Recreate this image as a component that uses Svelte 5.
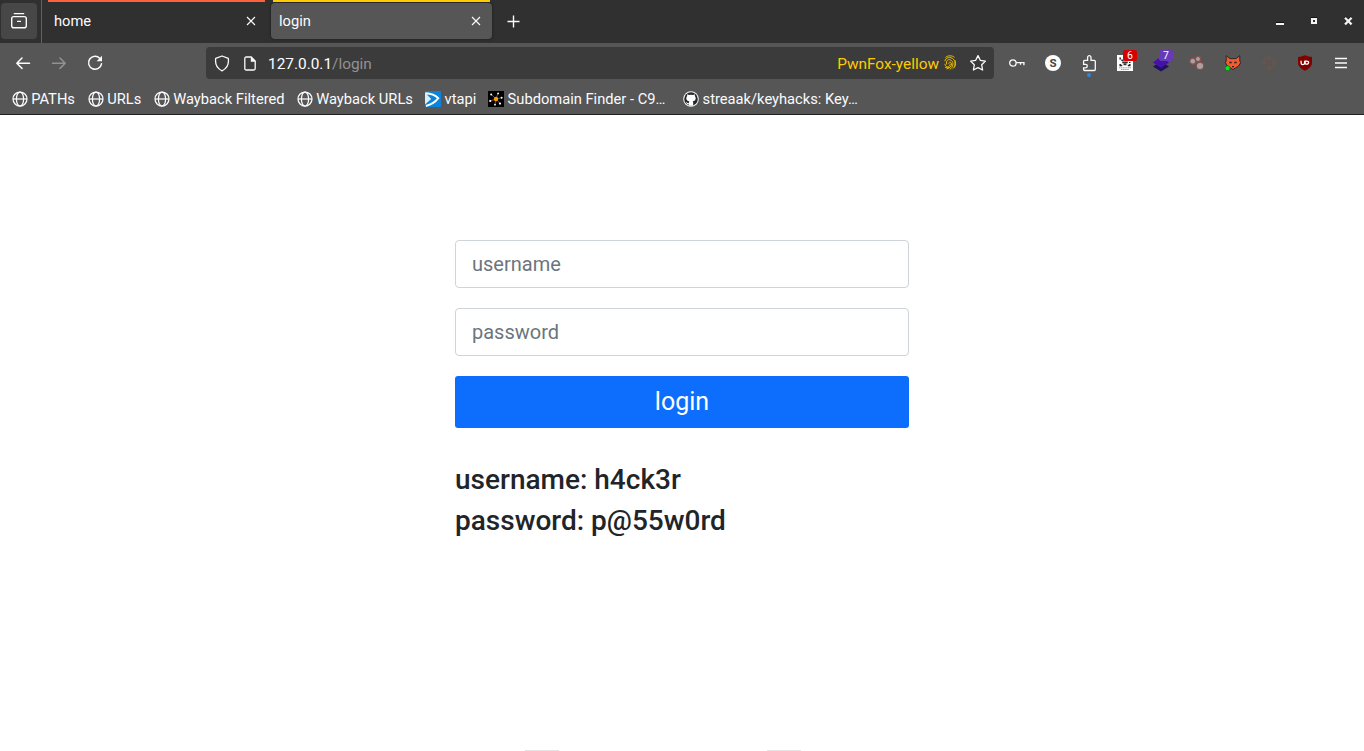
<script>
  const bookmarks = [
    { label: 'PATHs', icon: 'globe', width: 76 },
    { label: 'URLs', icon: 'globe', width: 66 },
    { label: 'Wayback Filtered', icon: 'globe', width: 143 },
    { label: 'Wayback URLs', icon: 'globe', width: 128.4 },
    { label: 'vtapi', icon: 'vt', width: 63 },
    { label: 'Subdomain Finder - C9…', icon: 'sub', width: 195 },
    { label: 'streaak/keyhacks: Key…', icon: 'github', width: 190 }
  ];
</script>

<div class="window">
  <header class="tabs">
    <button class="overview" aria-label="Recent">
      <svg width="18" height="18" viewBox="0 0 18 18" fill="none" stroke="#fbfbfe" stroke-width="1.4">
        <path d="M4.3 1.6h9.4" stroke-linecap="round" />
        <path d="M1.7 6.7Q1.7 4.6 3.8 4.6h10.4q2.1 0 2.1 2.1v7q0 2.1-2.1 2.1H3.8q-2.1 0-2.1-2.1zM7 9.4h4" />
      </svg>
    </button>
    <div class="tab home">
      <span>home</span>
      <svg width="10" height="10" viewBox="0 0 10 10" stroke="#fbfbfe" stroke-width="1.1"><path d="m1 1 8 8m0-8L1 9" /></svg>
    </div>
    <div class="tab active">
      <span>login</span>
      <svg width="10" height="10" viewBox="0 0 10 10" stroke="#fbfbfe" stroke-width="1.1"><path d="m1 1 8 8m0-8L1 9" /></svg>
    </div>
    <button class="new" aria-label="New tab">
      <svg width="13" height="13" viewBox="0 0 13 13" stroke="#fbfbfe" stroke-width="1.4"><path d="M6.5.5v12M.5 6.5h12" /></svg>
    </button>
    <div class="controls">
      <svg width="8" height="10" viewBox="0 0 8 10"><path d="M0 6h8v1H0z" fill="#111" /><path d="M0 7h8v2H0z" fill="#f3f3f3" /></svg>
      <svg width="6" height="8" viewBox="0 0 6 8"><path d="M0 0h6v1H0z" fill="#111" /><path d="M1 2h4v4H1z" fill="none" stroke="#f3f3f3" stroke-width="2" /></svg>
      <svg width="9" height="10" viewBox="0 0 9 10"><path d="m1 1 6.5 6.5m0-6.5L1 7.5" stroke="#111" stroke-width="2" /><path d="m1 1.8 6.6 6.6m0-6.6L1 8.4" stroke="#f3f3f3" stroke-width="2.2" /></svg>
    </div>
  </header>

  <div class="toolbar">
    <div class="nav">
      <svg width="16" height="16" viewBox="0 0 16 16" fill="none" stroke="#fbfbfe" stroke-width="1.5" stroke-linecap="round" stroke-linejoin="round"><path d="M14.5 8.2H1.8M7 3 1.8 8.2 7 13.4" /></svg>
      <svg width="16" height="16" viewBox="0 0 16 16" fill="none" stroke="#929292" stroke-width="1.5" stroke-linecap="round" stroke-linejoin="round"><path d="M1.5 8.2h12.7M9 3l5.2 5.2L9 13.4" /></svg>
      <svg width="16" height="16" viewBox="0 0 16 16" fill="none" stroke="#fbfbfe" stroke-width="1.5"><path d="M12.9 3.4A6.5 6.5 0 1 0 14.5 8.8" stroke-linecap="round" /><path d="M15 .8v5.5H9.6z" fill="#fbfbfe" stroke="none" /></svg>
    </div>
    <div class="url">
      <svg width="16" height="17" viewBox="0 0 16 17" fill="none" stroke="#fbfbfe" stroke-width="1.3" stroke-linejoin="round"><path d="M8 1 14.3 3.4C15 8.6 13.2 13.5 8 15.8 2.8 13.5 1 8.6 1.7 3.4z" /></svg>
      <svg class="page" width="12" height="15" viewBox="0 0 12 15"><path d="M2.3 1h4.9l4 4v7.5q0 1.5-1.5 1.5H2.3Q.8 14 .8 12.5v-10Q.8 1 2.3 1z" fill="none" stroke="#fbfbfe" stroke-width="1.3" /><path d="M6.8 1v4.7h4.7z" fill="#fbfbfe" /></svg>
      <span class="address">127.0.0.1<i>/login</i></span>
      <span class="container">PwnFox-yellow</span>
      <svg class="print" width="12" height="16" viewBox="0 0 12 16" fill="none" stroke="#edbe00" stroke-width="1">
        <path d="M1.5 2.4C3.5.3 8.5.3 10.5 2.4M.9 6.2C1.2 2 7 1.6 9.4 4.2c2.4 2.7 2.3 7.2-.8 9.6M2.8 9.6c-1.6-4.4 2-6 4.6-4.2 2.8 2.2 1.6 7-1.7 9.1M4.6 8.6c0-2 2.9-2 3 .2 0 2.8-2.6 4.6-5 5.2M.9 8.8c.3 3.4 3.3 3.7 4.6 2 .6-.8.7-1.4.6-2.2M1 12.1c1.1.8 2.7 1 4 .4M10.9 5c.8 2.4.7 5.4-.5 7.5" />
      </svg>
      <svg width="18" height="18" viewBox="0 0 18 18" fill="none" stroke="#fbfbfe" stroke-width="1.3" stroke-linejoin="round"><path d="m9 1.6 2.3 4.7 5.1.8-3.7 3.7.9 5.2L9 13.6 4.4 16l.9-5.2-3.7-3.7 5.1-.8z" /></svg>
    </div>
    <div class="extensions">
      <span><svg width="16" height="16" viewBox="0 0 16 16" fill="none" stroke="#fbfbfe" stroke-width="1.3"><circle cx="3.9" cy="8" r="3.2" /><path d="M7.1 7.7h8.5M14.9 7.7v2.6M11.5 7.7v2.1" /></svg></span>
      <span><svg width="16" height="16" viewBox="0 0 16 16"><circle cx="8" cy="8" r="8" fill="#fff" /><text x="8" y="12" text-anchor="middle" font-size="11.5" font-weight="700" fill="#444">S</text></svg></span>
      <span><svg width="16" height="32" viewBox="0 0 16 32"><path d="M2.6 17.3v-3q0-1 1-1h3V10.6c0-2.7 3.4-2.7 3.4 0v2.7h3.3q1 0 1 1v8.2q0 1-1 1H3.6q-1 0-1-1v-1.7h2c2.3 0 2.3-3.5 0-3.5z" fill="none" stroke="#fbfbfe" stroke-width="1.3" /><circle cx="8" cy="28" r="2" fill="#2b86e2" /></svg></span>
      <span class="badged">
        <svg width="16" height="16" viewBox="0 0 16 16"><path fill="#fff" d="M0 0h16v16H0z" /><path d="M3.2 2.5v2M12.8 7v1M3.2 9v1.6h2M12.8 9v1.6h-2" fill="none" stroke="#222" stroke-width="1.5" /><path d="M4.2 5.2h2.5M5.2 7.4h5.6M6.5 9.4h3" stroke="#333" stroke-width="1.6" /><path d="M2 12.8h12M4 14.5h8" stroke="#888" stroke-width=".8" stroke-dasharray="1.4 .4" /></svg>
        <b class="red">6</b>
      </span>
      <span class="badged">
        <svg width="18" height="18" viewBox="0 0 18 18"><path d="m1 12.5 8-5 8 5-8 5z" fill="#201063" /><path d="m1 8.5 8-6 8 6-8 5.5z" fill="#4512a8" /></svg>
        <b class="purple">7</b>
      </span>
      <span><svg width="16" height="16" viewBox="0 0 16 16" fill="#a9a2a2" stroke="#87514f" stroke-width="1.3"><circle cx="3.8" cy="6.2" r="3" /><circle cx="9" cy="4" r="2.6" /><circle cx="11" cy="11" r="3.7" /></svg></span>
      <span><svg width="16" height="16" viewBox="0 0 16 16"><path d="M1.2.6 5 3.6h6l3.8-3v5.2l.8 2-2 3.2L8 14.6l-5.6-3.6-2-3.2.8-2z" fill="#f15a32" stroke="#332622" stroke-width="1" /><path d="M4.3 7.5h2.4M9.3 7.5h2.4M7 11.6h2" stroke="#252525" stroke-width="1.4" /><circle cx="2.6" cy="13.3" r="2.5" fill="#00eb18" stroke="#174719" stroke-width=".5" /></svg></span>
      <span><svg width="16" height="16" viewBox="0 0 16 16" fill="none" stroke="#7d5242" stroke-width=".9"><path d="m8 .6 7.4 7.4L8 15.4.6 8z" /><path d="M7 4.4h2M4.3 7v2M11.8 7v2M7 11.8h2" stroke-width="1.5" /></svg></span>
      <span><svg width="16" height="16" viewBox="0 0 16 16"><path d="M8 .2Q11.8 2 15 2v5.5c0 4-3 6.2-7 8.3-4-2.1-7-4.3-7-8.3V2Q4.2 2 8 .2z" fill="#800000" /><path d="M4.1 5.7v2.2c0 2.2 3.5 2.2 3.5 0V5.7M8.2 9.1V6.1h1.4c2.7 0 2.7 3 0 3H8.2" fill="none" stroke="#fff" stroke-width="1.3" /></svg></span>
      <span><svg width="12" height="12" viewBox="0 0 12 12" stroke="#fbfbfe" stroke-width="1.3"><path d="M0 1.5h12M0 6h12M0 10.5h12" /></svg></span>
    </div>
  </div>

  <nav class="bookmarks">
    {#each bookmarks as item}
      <div class="bookmark" style:width="{item.width}px">
        {#if item.icon === 'globe'}
          <svg width="16" height="16" viewBox="0 0 16 16" fill="none" stroke="#fbfbfe" stroke-width="1.25"><circle cx="8" cy="8" r="7" /><ellipse cx="8" cy="8" rx="3.6" ry="7" /><path d="M1 8h14" /></svg>
        {:else if item.icon === 'vt'}
          <svg width="16" height="16" viewBox="0 0 16 16"><path d="M0 0h16v16H0z" fill="#0b83d9" /><path d="M0 1.5 6.2 8 0 13.5z" fill="#d8edf9" /><path d="M.5 2.2C5.8 2.4 10.2 4 13.3 7.2 10.4 11 6.4 13.6 1 15" fill="none" stroke="#fff" stroke-width="1.9" /></svg>
        {:else if item.icon === 'sub'}
          <svg width="16" height="16" viewBox="0 0 16 16"><path d="M0 0h16v16H0z" fill="#000" /><path d="m3.3 3.4 4.7 4.7L10 2M8 8l5.4-1.2M8 8l4 4.5M8 8l-1 5.8M8 8l-5.7 2" stroke="#aaa" stroke-width=".5" /><g fill="#fff"><circle cx="3.2" cy="3.4" r="1" /><circle cx="10.1" cy="2.4" r=".9" /><circle cx="13.6" cy="6.8" r="1" /><circle cx="12" cy="12.6" r="1.1" /><circle cx="7" cy="13.7" r=".9" /><circle cx="2.2" cy="10" r="1.1" /></g><circle cx="8" cy="8" r="2.2" fill="#ff9900" /></svg>
        {:else}
          <svg width="16" height="16" viewBox="0 0 16 16"><circle cx="8" cy="8" r="7.8" fill="#f7f7f7" /><circle cx="8" cy="8" r="6.8" fill="#24292e" /><path d="M4.3 3.2 6 4.1q2-.5 4 0l1.7-.9.3 2.1c1.5 2.2.6 4.7-2.3 5.1q.5.6.5 1.6v2.8H5.8v-1.6c-1.5.3-2-.4-2.4-1.3l-.8-.8c1.4-.1 1.4 1.6 3.2 1.1q.1-1.2.6-1.8c-3-.4-3.8-3-2.4-5.1z" fill="#fff" /></svg>
        {/if}
        <span>{item.label}</span>
      </div>
    {/each}
  </nav>

  <main>
    <form onsubmit={(event) => event.preventDefault()}>
      <input type="text" placeholder="username" />
      <input type="password" placeholder="password" />
      <button class="submit">login</button>
    </form>
    <div class="credentials">
      <h3>username: h4ck3r</h3>
      <h3>password: p@55w0rd</h3>
    </div>
    <div class="edge"><i></i><i></i></div>
  </main>
</div>

<style>
  :global(body) { margin: 0; overflow: hidden; }
  * { box-sizing: border-box; }
  .window { width: 1364px; height: 751px; display: flex; flex-direction: column; font: 14.7px Roboto, sans-serif; color: #fbfbfe; background: #fff; overflow: hidden; }
  svg { display: block; flex: none; }
  svg text { font-family: Roboto, sans-serif; }
  button { border: 0; padding: 0; color: inherit; font: inherit; background: none; }
  .tabs { height: 43px; flex: none; display: flex; background: #303030; }
  .overview { width: 36px; height: 36px; margin: 3px 4px 0 1px; border-radius: 4px; background: #474747; display: grid; place-items: center; }
  .tab { display: flex; align-items: center; justify-content: space-between; }
  .home { width: 224px; height: 43px; padding: 0 9px 2px 12px; border-left: 1px solid #626262; background: linear-gradient(#ff613d, #ff613d) 6px 0 / 217px 2px no-repeat; }
  .active { width: 221px; height: 36px; margin: 3px 0 0 6px; padding: 0 11px 0 8px; border-radius: 4px; background: #565656; box-shadow: 0 0 3px #1a1a1a; position: relative; }
  .active::before { content: ''; position: absolute; top: -3px; left: 2px; width: 217px; height: 2px; background: #ffcb00; }
  .new { margin-left: 15px; height: 43px; }
  .controls { margin-left: auto; width: 88px; height: 42px; display: flex; align-items: center; }
  .controls svg:nth-child(2) { margin-left: 27px; }
  .controls svg:nth-child(3) { margin-left: 27px; }
  .toolbar { height: 40px; flex: none; display: flex; align-items: center; background: #565656; }
  .nav { width: 206px; padding-left: 15px; display: flex; gap: 20px; }
  .url { width: 788px; height: 32px; display: flex; align-items: center; padding: 0 7px 0 8px; background: #3b3b3b; border-radius: 4px; }
  .page { margin-left: 14px; }
  .address { margin-left: 12px; padding-top: 1px; font-size: 15.4px; }
  .address i { color: #929292; font-style: normal; }
  .container { margin-left: auto; padding-top: 1px; color: #ffcb00; font-size: 15.4px; }
  .print { margin: 0 13px 0 5px; }
  .extensions { padding-left: 5px; display: grid; grid-template-columns: repeat(10, 36px); }
  .extensions span { height: 32px; display: grid; place-items: center; position: relative; }
  .badged b { position: absolute; left: 16px; top: 3px; width: 14px; height: 11px; border-radius: 2px; font-size: 10.5px; line-height: 11px; font-weight: 400; text-align: center; }
  .red { background: #d70000; }
  .purple { background: #673ab7; }
  .bookmarks { height: 32px; flex: none; padding: 0 0 0 11.6px; display: flex; background: #565656; border-bottom: 1px solid #202020; }
  .bookmark { height: 32px; flex: none; display: flex; align-items: center; gap: 3.6px; white-space: nowrap; }
  main { flex: 1; display: flex; flex-direction: column; align-items: center; padding-top: 125px; color: #212529; }
  form { width: 454px; display: flex; flex-direction: column; gap: 20px; }
  input { width: 100%; height: 48px; padding: 8px 16px; border: 1px solid #ced4da; border-radius: 4px; font: 20px/30px Roboto, sans-serif; }
  input::placeholder { color: #6c757d; opacity: 1; }
  .submit { height: 52px; color: #fff; background: #0d6efd; border-radius: 3px; font-size: 25px; line-height: 50px; }
  .credentials { width: 454px; margin-top: 35px; }
  h3 { margin: 0 0 8px; font-size: 28px; line-height: 33px; font-weight: 500; }
  .edge { width: 276px; height: 1px; margin-top: auto; display: flex; justify-content: space-between; transform: translateX(-19px); }
  .edge i { width: 34px; background: #e3e3e3; }
</style>
